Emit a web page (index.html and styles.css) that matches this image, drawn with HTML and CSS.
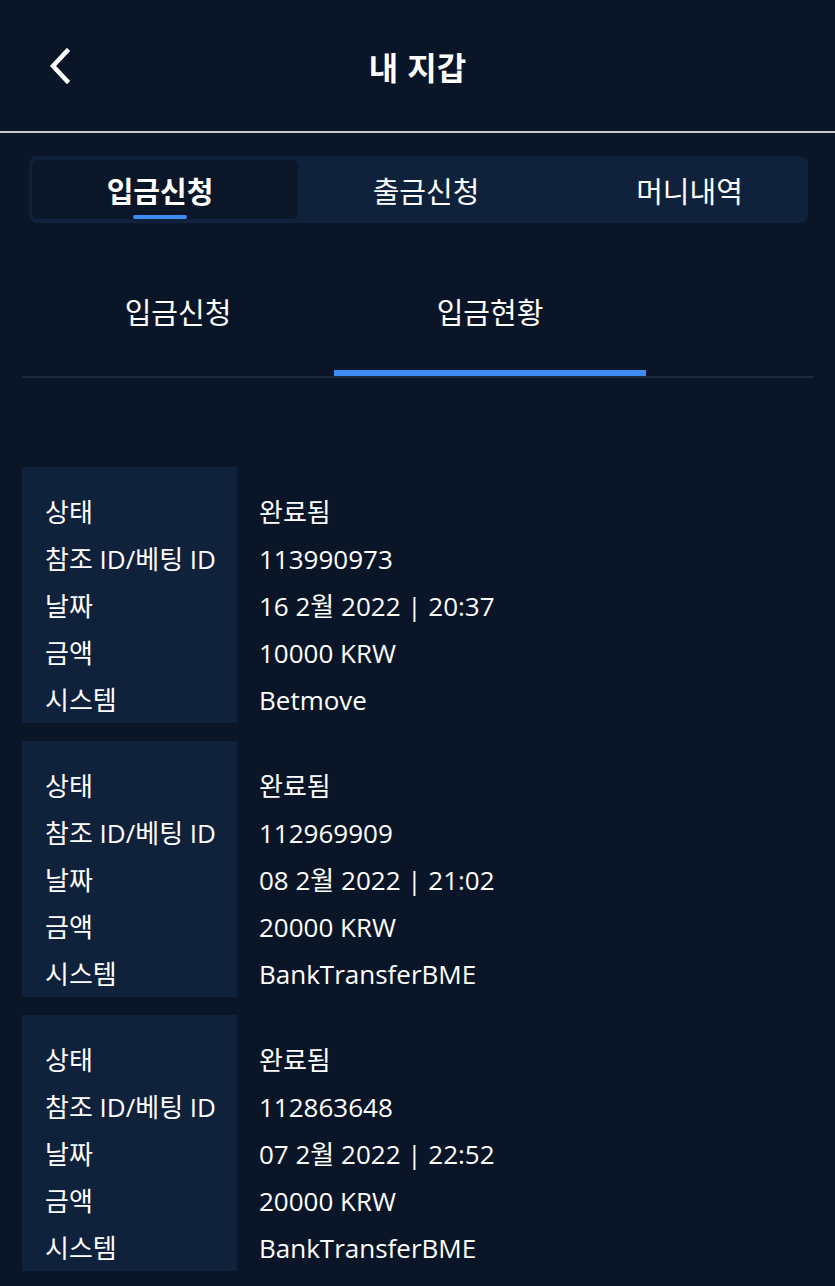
FILE: index.html
```html
<!DOCTYPE html>
<html lang="ko">
<head>
  <meta charset="UTF-8" />
  <meta name="viewport" content="width=device-width, initial-scale=1.0"/>
  <title>내 지갑</title>
  <link rel="stylesheet" href="styles.css">
</head>
<body>
  <header class="top-bar">
    <button class="back-btn" type="button" aria-label="뒤로">
      <svg width="24" height="36" viewBox="0 0 24 36"><path d="M19 3 L5 18 L19 33" fill="none" stroke="#fff" stroke-width="4.5" stroke-linecap="square"/></svg>
    </button>
    <h1>내 지갑</h1>
    <span></span>
  </header>

  <!-- Main tabs -->
  <nav class="main-tabs">
    <a class="main-tab active">입금신청</a>
    <a class="main-tab">출금신청</a>
    <a class="main-tab last">머니내역</a>
  </nav>

  <!-- Sub tabs -->
  <div class="sub-tabs">
    <a class="sub-tab">입금신청</a>
    <a class="sub-tab active">입금현황</a>
  </div>

  <div class="history">
    <div class="record">
      <div class="labels">
        <div>상태</div><div>참조 ID/베팅 ID</div><div>날짜</div><div>금액</div><div>시스템</div>
      </div>
      <div class="values">
        <div>완료됨</div><div>113990973</div><div>16 2월 2022 | 20:37</div><div>10000 KRW</div><div>Betmove</div>
      </div>
    </div>

    <div class="record">
      <div class="labels">
        <div>상태</div><div>참조 ID/베팅 ID</div><div>날짜</div><div>금액</div><div>시스템</div>
      </div>
      <div class="values">
        <div>완료됨</div><div>112969909</div><div>08 2월 2022 | 21:02</div><div>20000 KRW</div><div>BankTransferBME</div>
      </div>
    </div>

    <div class="record">
      <div class="labels">
        <div>상태</div><div>참조 ID/베팅 ID</div><div>날짜</div><div>금액</div><div>시스템</div>
      </div>
      <div class="values">
        <div>완료됨</div><div>112863648</div><div>07 2월 2022 | 22:52</div><div>20000 KRW</div><div>BankTransferBME</div>
      </div>
    </div>
  </div>
</body>
</html>
```

FILE: styles.css
```css
body {
  margin: 0;
  background-color: #0a1628;
  color: #fff;
  font-family: "Open Sans", "Noto Sans CJK KR", sans-serif;
}

.top-bar {
  height: 131px;
  display: grid;
  grid-template-columns: 1fr auto 1fr;
  align-items: center;
  border-bottom: 2px solid #c9c9c9;
}

.back-btn {
  justify-self: start;
  margin-left: 48px;
  padding: 0;
  background: none;
  border: none;
  display: flex;
}

.top-bar h1 {
  margin: 0;
  font-family: "Noto Sans CJK KR", sans-serif;
  font-size: 32px;
  font-weight: 700;
}

.main-tabs {
  margin: 23px 27px 0 29px;
  height: 67px;
  padding: 4px 3px;
  box-sizing: border-box;
  background-color: #10213b;
  border-radius: 8px;
  display: grid;
  grid-template-columns: 266px 266px 1fr;
  overflow: hidden;
}

.main-tab {
  position: relative;
  display: flex;
  align-items: center;
  justify-content: center;
  padding-right: 10px;
  font-family: "Noto Sans CJK KR", sans-serif;
  font-size: 29px;
  border-radius: 6px;
}

.main-tab.last {
  padding-left: 20px;
}

.main-tab.active {
  background-color: #0b1628;
  font-weight: 700;
}

.main-tab.active::after {
  content: "";
  position: absolute;
  left: 101px;
  bottom: 0;
  width: 54px;
  height: 4px;
  border-radius: 2px;
  background-color: #3b8cf4;
}

.sub-tabs {
  margin: 25px 22px 0;
  display: flex;
  border-bottom: 2px solid #1e2a3c;
}

.sub-tab {
  width: 312px;
  padding: 40px 0 36px;
  line-height: 46px;
  text-align: center;
  font-family: "Noto Sans CJK KR", sans-serif;
  font-size: 29px;
  border-bottom: 6px solid transparent;
}

.sub-tab.active {
  border-bottom-color: #3b8cf4;
}

.history {
  margin: 89px 22px 0;
  display: flex;
  flex-direction: column;
  gap: 18px;
}

.record {
  display: flex;
  height: 256px;
  font-size: 26px;
  line-height: 47px;
}

.labels {
  width: 215px;
  box-sizing: border-box;
  padding: 22px 0 0 23px;
  background-color: #10213b;
}

.values {
  padding: 22px 0 0 22px;
}
```
